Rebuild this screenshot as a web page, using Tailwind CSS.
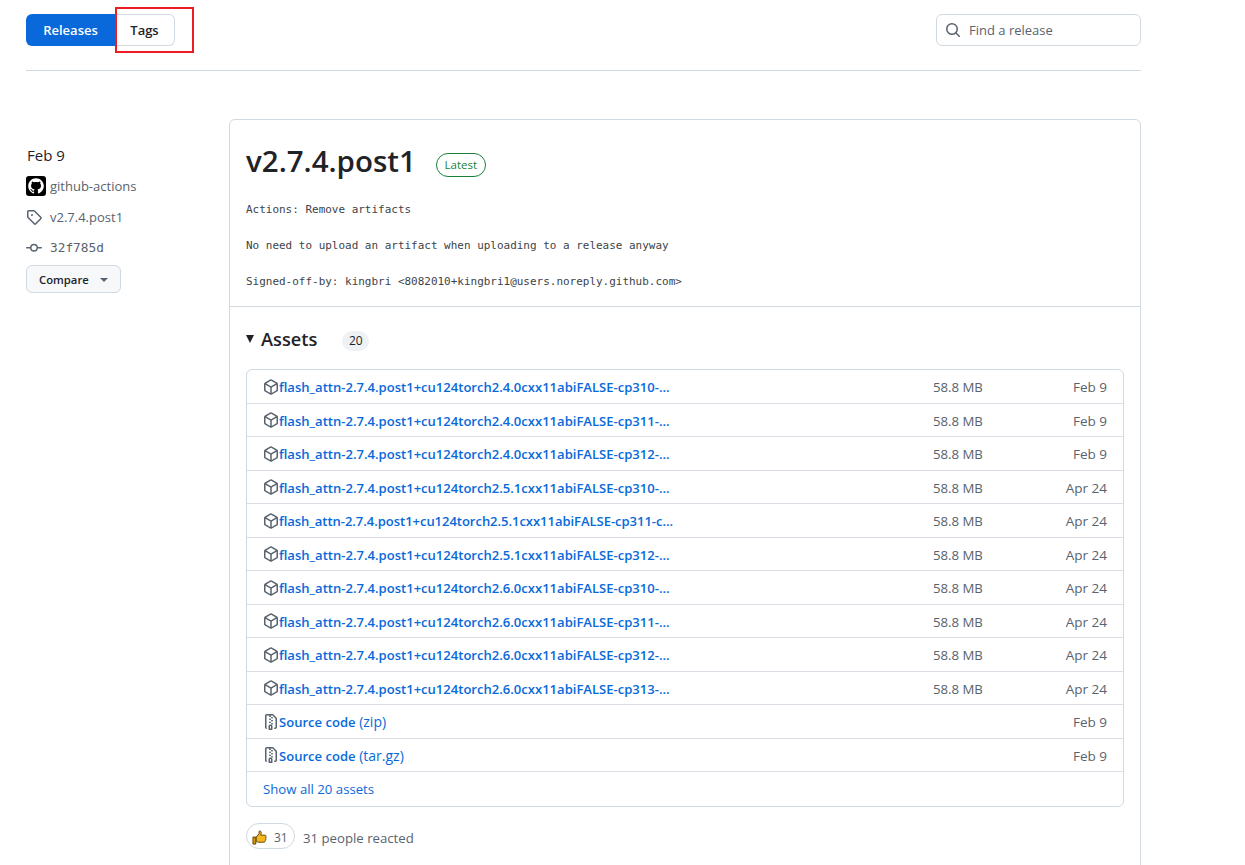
<!DOCTYPE html>
<html lang="en">
<head>
  <meta charset="UTF-8" />
  <title>Releases</title>
  <script src="https://cdn.jsdelivr.net/npm/@tailwindcss/browser@4"></script>
</head>
<body class="bg-white text-[#1f2328] font-['Open_Sans','Noto_Sans',sans-serif] text-sm overflow-hidden h-[865px]">
  <svg class="hidden">
    <symbol id="pkg" viewBox="0 0 16 16"><path d="m8.878.392 5.25 3.045c.54.314.872.89.872 1.514v6.098a1.75 1.75 0 0 1-.872 1.514l-5.25 3.045a1.75 1.75 0 0 1-1.756 0l-5.25-3.045A1.75 1.75 0 0 1 1 11.049V4.951c0-.624.332-1.201.872-1.514L7.122.392a1.75 1.75 0 0 1 1.756 0ZM7.875 1.69l-4.63 2.685L8 7.133l4.755-2.758-4.63-2.685a.248.248 0 0 0-.25 0ZM2.5 5.677v5.372c0 .09.047.171.125.216l4.625 2.683V8.432Zm6.25 8.271 4.625-2.683a.25.25 0 0 0 .125-.216V5.677L8.75 8.432Z"/></symbol>
    <symbol id="zip" viewBox="0 0 16 16"><path d="M3.5 1.75v11.5c0 .09.048.173.126.217a.75.75 0 0 1-.752 1.298A1.748 1.748 0 0 1 2 13.25V1.75C2 .784 2.784 0 3.75 0h5.586c.464 0 .909.185 1.237.513l2.914 2.914c.329.328.513.773.513 1.237v8.586A1.75 1.75 0 0 1 12.25 15h-.5a.75.75 0 0 1 0-1.5h.5a.25.25 0 0 0 .25-.25V4.664a.25.25 0 0 0-.073-.177L9.513 1.573a.25.25 0 0 0-.177-.073H7.25a.75.75 0 0 1 0 1.5h-.5a.75.75 0 0 1 0-1.5h-3a.25.25 0 0 0-.25.25Zm3.75 8.75h.5c.966 0 1.75.784 1.75 1.75v3a.75.75 0 0 1-.75.75h-2.5a.75.75 0 0 1-.75-.75v-3c0-.966.784-1.75 1.750-1.75ZM6 5.25a.75.75 0 0 1 .75-.75h.5a.75.75 0 0 1 0 1.5h-.5A.75.75 0 0 1 6 5.25Zm.75 2.25h.5a.75.75 0 0 1 0 1.5h-.5a.75.75 0 0 1 0-1.5ZM8 6.75A.75.75 0 0 1 8.75 6h.5a.75.75 0 0 1 0 1.5h-.5A.75.75 0 0 1 8 6.75ZM8.75 3h.5a.75.75 0 0 1 0 1.5h-.5a.75.75 0 0 1 0-1.5ZM8 9.75A.75.75 0 0 1 8.75 9h.5a.75.75 0 0 1 0 1.5h-.5A.75.75 0 0 1 8 9.75Zm-1 2.5v2.25h1v-2.25a.25.25 0 0 0-.25-.25h-.5a.25.25 0 0 0-.25.25Z"/></symbol>
  </svg>

  <div class="w-[1115px] ml-[26px] relative">
    <!-- red annotation from the screenshot -->
    <div class="absolute left-[89px] top-[7px] w-[79px] h-[46px] border-2 border-[#ed1c24] pointer-events-none"></div>

    <header class="h-[71px] pt-[14px] border-b border-[#d1d9e0] flex justify-between items-start">
      <div class="flex h-8 text-[13px] font-semibold">
        <a class="w-[89px] bg-[#0969da] text-white rounded-l-md flex items-center justify-center">Releases</a>
        <a class="w-[60px] border border-l-0 border-[#d1d9e0] rounded-r-md flex items-center justify-center">Tags</a>
      </div>
      <div class="w-[205px] h-8 border border-[#d1d9e0] rounded-md flex items-center pl-2 gap-2 text-[13px] text-[#59636e]">
        <svg width="16" height="16" viewBox="0 0 16 16" fill="#59636e"><path d="M10.68 11.74a6 6 0 0 1-7.922-8.982 6 6 0 0 1 8.982 7.922l3.04 3.04a.749.749 0 0 1-.326 1.275.749.749 0 0 1-.734-.215ZM11.5 7a4.499 4.499 0 1 0-8.997 0A4.499 4.499 0 0 0 11.5 7Z"/></svg>
        <span>Find a release</span>
      </div>
    </header>

    <div class="flex pt-[48px]">
      <aside class="w-[203px] shrink-0 pt-[26px]">
        <div class="text-[15px] leading-5 pl-px">Feb 9</div>
        <div class="flex items-center gap-1 mt-[11px] h-5 text-[13px] text-[#59636e]">
          <svg width="20" height="20" viewBox="0 0 20 20"><rect width="20" height="20" rx="3" fill="#000"/><g transform="translate(1.5 1.5) scale(.71)" fill="#fff"><path d="M12 1C5.9225 1 1 5.9225 1 12C1 16.8675 4.14875 20.9787 8.52125 22.4362C9.07125 22.5325 9.2775 22.2025 9.2775 21.9137C9.2775 21.6525 9.26375 20.7862 9.26375 19.865C6.5 20.3737 5.785 19.1912 5.565 18.5725C5.44125 18.2562 4.905 17.28 4.4375 17.0187C4.0525 16.8125 3.5025 16.3037 4.42375 16.29C5.29 16.2762 5.90875 17.0875 6.115 17.4175C7.105 19.0812 8.68625 18.6137 9.31875 18.325C9.415 17.61 9.70375 17.1287 10.02 16.8537C7.5725 16.5787 5.015 15.63 5.015 11.4225C5.015 10.2262 5.44125 9.23625 6.1425 8.46625C6.0325 8.19125 5.6475 7.06375 6.2525 5.55125C6.2525 5.55125 7.17375 5.2625 9.2775 6.67875C10.1575 6.43125 11.0925 6.3075 12.0275 6.3075C12.9625 6.3075 13.8975 6.43125 14.7775 6.67875C16.8813 5.24875 17.8025 5.55125 17.8025 5.55125C18.4075 7.06375 18.0225 8.19125 17.9125 8.46625C18.6138 9.23625 19.04 10.2125 19.04 11.4225C19.04 15.6437 16.4688 16.5787 14.0213 16.8537C14.42 17.1975 14.7638 17.8575 14.7638 18.8887C14.7638 20.36 14.75 21.5425 14.75 21.9137C14.75 22.2025 14.9563 22.5462 15.5063 22.4362C19.8513 20.9787 23 16.8537 23 12C23 5.9225 18.0775 1 12 1Z"/></g></svg>
          <span>github-actions</span>
        </div>
        <div class="flex items-center gap-2 mt-[11px] h-5 text-[13px] text-[#59636e]">
          <svg width="16" height="16" viewBox="0 0 16 16" fill="#59636e"><path d="M1 7.775V2.75C1 1.784 1.784 1 2.75 1h5.025c.464 0 .91.184 1.238.513l6.25 6.25a1.75 1.75 0 0 1 0 2.474l-5.026 5.026a1.75 1.75 0 0 1-2.474 0l-6.25-6.25A1.752 1.752 0 0 1 1 7.775Zm1.5 0c0 .066.026.13.073.177l6.25 6.25a.25.25 0 0 0 .354 0l5.025-5.025a.25.25 0 0 0 0-.354l-6.25-6.25a.25.25 0 0 0-.177-.073H2.75a.25.25 0 0 0-.25.25ZM6 5a1 1 0 1 1 0 2 1 1 0 0 1 0-2Z"/></svg>
          <span>v2.7.4.post1</span>
        </div>
        <div class="flex items-center gap-2 mt-[11px] h-5 text-[#59636e]">
          <svg width="16" height="16" viewBox="0 0 16 16" fill="#59636e"><path d="M11.93 8.5a4.002 4.002 0 0 1-7.86 0H.75a.75.75 0 0 1 0-1.5h3.32a4.002 4.002 0 0 1 7.86 0h3.32a.75.75 0 0 1 0 1.5Zm-1.43-.75a2.5 2.5 0 1 0-5 0 2.5 2.5 0 0 0 5 0Z"/></svg>
          <span class="font-['DejaVu_Sans_Mono',monospace] text-[12.8px]">32f785d</span>
        </div>
        <div class="mt-[7px] w-[95px] h-7 pt-[2px] border border-[#d1d9e0] rounded-md bg-[#f6f8fa] flex items-center pl-3 gap-2 text-[11.3px] font-semibold">
          <span>Compare</span>
          <span class="w-0 h-0 border-x-4 border-x-transparent border-t-4 border-t-[#59636e] ml-[3px]"></span>
        </div>
      </aside>

      <main class="w-[912px] h-[760px] border border-[#d1d9e0] rounded-md">
        <section class="h-[187px] border-b border-[#d1d9e0] pl-4 pt-[21px]">
          <div class="flex items-center gap-5 h-11">
            <h1 class="text-[29.5px] leading-10 font-semibold -mt-[4px]">v2.7.4.post1</h1>
            <span class="mt-[4px] h-6 w-[50px] border border-[#1a7f37] rounded-full text-[#1a7f37] text-[11.5px] font-medium flex items-center justify-center">Latest</span>
          </div>
          <pre class="mt-[16px] font-['DejaVu_Sans_Mono',monospace] text-[10.97px] leading-[18px] text-[#3d4349]">Actions: Remove artifacts

No need to upload an artifact when uploading to a release anyway

Signed-off-by: kingbri &lt;8082010+kingbri1@users.noreply.github.com&gt;</pre>
        </section>

        <section class="px-4 pt-[18px]">
          <div class="flex items-center h-7">
            <span class="w-0 h-0 border-x-[4.5px] border-x-transparent border-t-[8px] border-t-[#1f2328] mr-[7px]"></span>
            <h2 class="text-[18.2px] font-semibold">Assets</h2>
            <span class="ml-[25px] h-5 w-[27px] rounded-full bg-[#eff2f5] text-xs flex items-center justify-center mt-[3px]">20</span>
          </div>

          <div class="mt-[16px] border border-[#d1d9e0] rounded-md text-[13.2px] text-[#59636e]">
            <div class="h-[33.5px] pt-[3px] border-b border-[#d8dee4] flex items-center px-4">
              <svg class="shrink-0 w-4 h-4 fill-[#59636e] -mt-[2px]"><use href="#pkg"/></svg>
              <a class="text-[#0969da] text-[13.06px] font-semibold whitespace-nowrap">flash_attn-2.7.4.post1+cu124torch2.4.0cxx11abiFALSE-cp310-...</a>
              <span class="ml-auto w-[50px] whitespace-nowrap">58.8 MB</span><span class="ml-[79px] w-[45px] text-[13.5px] text-right whitespace-nowrap">Feb 9</span>
            </div>
            <div class="h-[33.5px] pt-[3px] border-b border-[#d8dee4] flex items-center px-4">
              <svg class="shrink-0 w-4 h-4 fill-[#59636e] -mt-[2px]"><use href="#pkg"/></svg>
              <a class="text-[#0969da] text-[13.06px] font-semibold whitespace-nowrap">flash_attn-2.7.4.post1+cu124torch2.4.0cxx11abiFALSE-cp311-...</a>
              <span class="ml-auto w-[50px] whitespace-nowrap">58.8 MB</span><span class="ml-[79px] w-[45px] text-[13.5px] text-right whitespace-nowrap">Feb 9</span>
            </div>
            <div class="h-[33.5px] pt-[3px] border-b border-[#d8dee4] flex items-center px-4">
              <svg class="shrink-0 w-4 h-4 fill-[#59636e] -mt-[2px]"><use href="#pkg"/></svg>
              <a class="text-[#0969da] text-[13.06px] font-semibold whitespace-nowrap">flash_attn-2.7.4.post1+cu124torch2.4.0cxx11abiFALSE-cp312-...</a>
              <span class="ml-auto w-[50px] whitespace-nowrap">58.8 MB</span><span class="ml-[79px] w-[45px] text-[13.5px] text-right whitespace-nowrap">Feb 9</span>
            </div>
            <div class="h-[33.5px] pt-[3px] border-b border-[#d8dee4] flex items-center px-4">
              <svg class="shrink-0 w-4 h-4 fill-[#59636e] -mt-[2px]"><use href="#pkg"/></svg>
              <a class="text-[#0969da] text-[13.06px] font-semibold whitespace-nowrap">flash_attn-2.7.4.post1+cu124torch2.5.1cxx11abiFALSE-cp310-...</a>
              <span class="ml-auto w-[50px] whitespace-nowrap">58.8 MB</span><span class="ml-[79px] w-[45px] text-[13.5px] text-right whitespace-nowrap">Apr 24</span>
            </div>
            <div class="h-[33.5px] pt-[3px] border-b border-[#d8dee4] flex items-center px-4">
              <svg class="shrink-0 w-4 h-4 fill-[#59636e] -mt-[2px]"><use href="#pkg"/></svg>
              <a class="text-[#0969da] text-[13.06px] tracking-[-0.05px] font-semibold whitespace-nowrap">flash_attn-2.7.4.post1+cu124torch2.5.1cxx11abiFALSE-cp311-c...</a>
              <span class="ml-auto w-[50px] whitespace-nowrap">58.8 MB</span><span class="ml-[79px] w-[45px] text-[13.5px] text-right whitespace-nowrap">Apr 24</span>
            </div>
            <div class="h-[33.5px] pt-[3px] border-b border-[#d8dee4] flex items-center px-4">
              <svg class="shrink-0 w-4 h-4 fill-[#59636e] -mt-[2px]"><use href="#pkg"/></svg>
              <a class="text-[#0969da] text-[13.06px] font-semibold whitespace-nowrap">flash_attn-2.7.4.post1+cu124torch2.5.1cxx11abiFALSE-cp312-...</a>
              <span class="ml-auto w-[50px] whitespace-nowrap">58.8 MB</span><span class="ml-[79px] w-[45px] text-[13.5px] text-right whitespace-nowrap">Apr 24</span>
            </div>
            <div class="h-[33.5px] pt-[3px] border-b border-[#d8dee4] flex items-center px-4">
              <svg class="shrink-0 w-4 h-4 fill-[#59636e] -mt-[2px]"><use href="#pkg"/></svg>
              <a class="text-[#0969da] text-[13.06px] font-semibold whitespace-nowrap">flash_attn-2.7.4.post1+cu124torch2.6.0cxx11abiFALSE-cp310-...</a>
              <span class="ml-auto w-[50px] whitespace-nowrap">58.8 MB</span><span class="ml-[79px] w-[45px] text-[13.5px] text-right whitespace-nowrap">Apr 24</span>
            </div>
            <div class="h-[33.5px] pt-[3px] border-b border-[#d8dee4] flex items-center px-4">
              <svg class="shrink-0 w-4 h-4 fill-[#59636e] -mt-[2px]"><use href="#pkg"/></svg>
              <a class="text-[#0969da] text-[13.06px] font-semibold whitespace-nowrap">flash_attn-2.7.4.post1+cu124torch2.6.0cxx11abiFALSE-cp311-...</a>
              <span class="ml-auto w-[50px] whitespace-nowrap">58.8 MB</span><span class="ml-[79px] w-[45px] text-[13.5px] text-right whitespace-nowrap">Apr 24</span>
            </div>
            <div class="h-[33.5px] pt-[3px] border-b border-[#d8dee4] flex items-center px-4">
              <svg class="shrink-0 w-4 h-4 fill-[#59636e] -mt-[2px]"><use href="#pkg"/></svg>
              <a class="text-[#0969da] text-[13.06px] font-semibold whitespace-nowrap">flash_attn-2.7.4.post1+cu124torch2.6.0cxx11abiFALSE-cp312-...</a>
              <span class="ml-auto w-[50px] whitespace-nowrap">58.8 MB</span><span class="ml-[79px] w-[45px] text-[13.5px] text-right whitespace-nowrap">Apr 24</span>
            </div>
            <div class="h-[33.5px] pt-[3px] border-b border-[#d8dee4] flex items-center px-4">
              <svg class="shrink-0 w-4 h-4 fill-[#59636e] -mt-[2px]"><use href="#pkg"/></svg>
              <a class="text-[#0969da] text-[13.06px] font-semibold whitespace-nowrap">flash_attn-2.7.4.post1+cu124torch2.6.0cxx11abiFALSE-cp313-...</a>
              <span class="ml-auto w-[50px] whitespace-nowrap">58.8 MB</span><span class="ml-[79px] w-[45px] text-[13.5px] text-right whitespace-nowrap">Apr 24</span>
            </div>
            <div class="h-[33.5px] pt-[2px] border-b border-[#d8dee4] flex items-center px-4">
              <svg class="shrink-0 w-4 h-4 fill-[#59636e] -mt-[1px]"><use href="#zip"/></svg>
              <a class="text-[#0969da] text-sm whitespace-nowrap"><b class="font-semibold text-[13.06px]">Source code</b> (zip)</a>
              <span class="ml-auto w-[45px] text-[13.5px] text-right whitespace-nowrap">Feb 9</span>
            </div>
            <div class="h-[33.5px] pt-[3px] border-b border-[#d8dee4] flex items-center px-4">
              <svg class="shrink-0 w-4 h-4 fill-[#59636e] -mt-[2px]"><use href="#zip"/></svg>
              <a class="text-[#0969da] text-sm whitespace-nowrap"><b class="font-semibold text-[13.06px]">Source code</b> (tar.gz)</a>
              <span class="ml-auto w-[45px] text-[13.5px] text-right whitespace-nowrap">Feb 9</span>
            </div>
            <div class="h-[34px] flex items-center px-4">
              <a class="text-[#0969da] whitespace-nowrap">Show all 20 assets</a>
            </div>
          </div>

          <div class="mt-4 flex items-center gap-2 text-[13.2px] text-[#59636e]">
            <div class="w-[49px] h-[26px] border border-[#d1d9e0] rounded-full flex items-center pl-[5px] gap-[7px] text-xs">
              <svg class="mt-[2px]" width="15" height="15" viewBox="0 0 16 16"><path d="M1 7.5h3v7.500H1Z" fill="#d99e0b" stroke="#5c4000" stroke-width="1"/><path d="M4.500 7.500 7.500 4V1.600c0-.9 2-.9 2.300.8.200 1.100-.2 2.300-.6 3.100h4.600c1.300 0 1.500 1.500.7 2 .8.500.7 1.700-.1 2 .5.600.3 1.600-.5 1.900.2.700-.2 1.600-1.200 1.600H7c-1 0-1.700-.4-2.500-.8Z" fill="#f5b81f" stroke="#5c4000" stroke-width="1"/></svg>
              <span class="pt-[3px]">31</span>
            </div>
            <span class="mt-[4px]">31 people reacted</span>
          </div>
        </section>
      </main>
    </div>
  </div>
</body>
</html>
